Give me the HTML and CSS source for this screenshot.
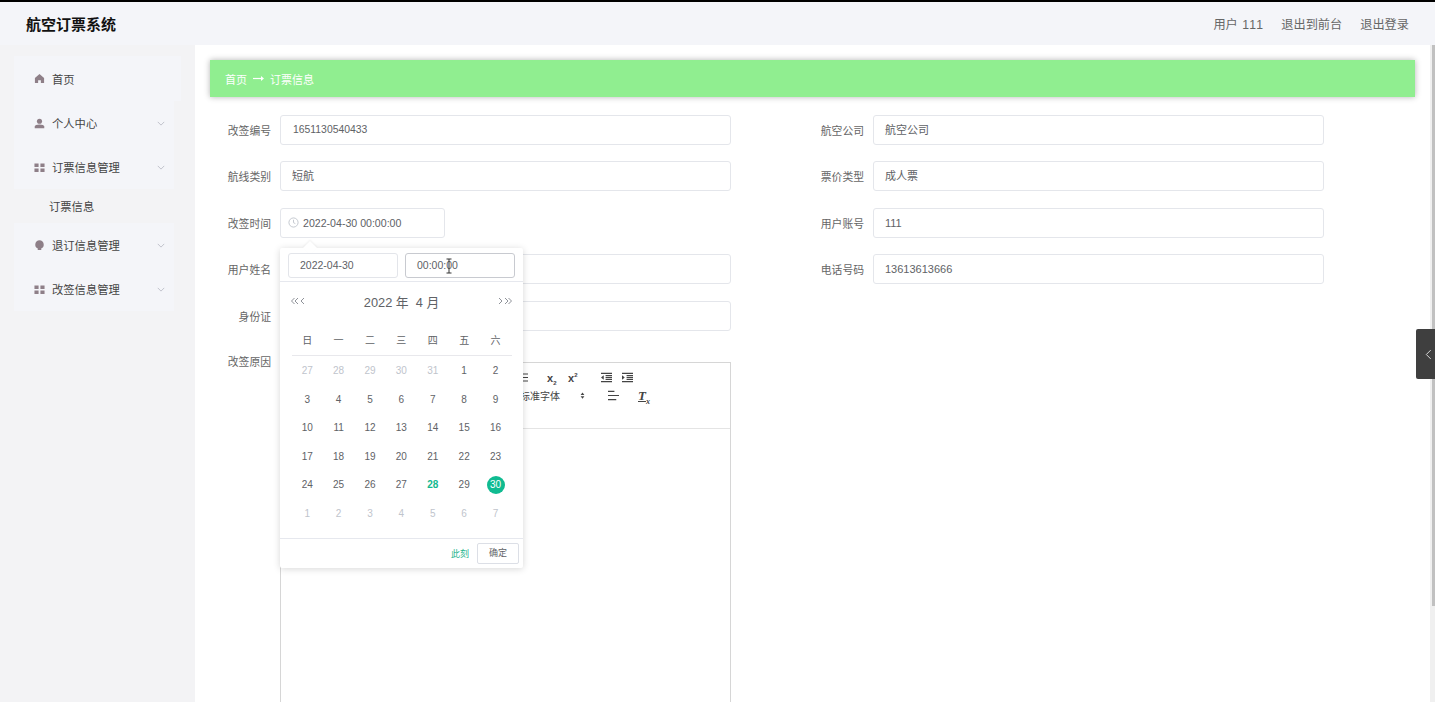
FILE: index.html
```html
<!DOCTYPE html>
<html lang="zh">
<head>
<meta charset="utf-8">
<title>航空订票系统</title>
<link rel="stylesheet" href="styles.css">
</head>
<body>
<header class="topbar">
  <div class="brand">航空订票系统</div>
  <nav class="topnav">
    <span>用户 <span class="uid">111</span></span><span>退出到前台</span><span>退出登录</span>
  </nav>
</header>
<div class="shell">
  <aside class="sidebar">
    <ul class="menu">
      <li class="menu-item home">
        <svg class="mi" viewBox="0 0 12 12"><path d="M6 1 1 5.500V11h3.500V8h3v3H11V5.500z"/></svg><span>首页</span>
      </li>
      <li class="menu-item">
        <svg class="mi" viewBox="0 0 12 12"><circle cx="6" cy="3.600" r="2.800"/><path d="M.8 11.200V9.400C.8 8 3 7 6 7s5.200 1 5.200 2.400v1.800z"/></svg><span>个人中心</span>
        <svg class="chev" viewBox="0 0 10 6"><path d="M1 1l4 4 4-4"/></svg>
      </li>
      <li class="menu-item">
        <svg class="mi" viewBox="0 0 12 12"><path d="M.5 1.500h4.500v4H.5zM7 1.500h4.500v4H7zM.5 7h4.500v4H.5zM7 7h4.500v4H7z"/></svg><span>订票信息管理</span>
        <svg class="chev" viewBox="0 0 10 6"><path d="M1 1l4 4 4-4"/></svg>
      </li>
      <li class="submenu">订票信息</li>
      <li class="menu-item">
        <svg class="mi" viewBox="0 0 12 12"><path d="M6 .3a4.700 4.700 0 0 1 1.800 9L8 11H4l.2-1.700A4.700 4.700 0 0 1 6 .3z"/></svg><span>退订信息管理</span>
        <svg class="chev" viewBox="0 0 10 6"><path d="M1 1l4 4 4-4"/></svg>
      </li>
      <li class="menu-item">
        <svg class="mi" viewBox="0 0 12 12"><path d="M.5 1.500h4.500v4H.5zM7 1.500h4.500v4H7zM.5 7h4.500v4H.5zM7 7h4.500v4H7z"/></svg><span>改签信息管理</span>
        <svg class="chev" viewBox="0 0 10 6"><path d="M1 1l4 4 4-4"/></svg>
      </li>
    </ul>
  </aside>
  <main class="content">
    <div class="crumb"><span>首页</span><svg class="arrow" viewBox="0 0 11 7"><path class="shaft" d="M0 3.500h9"/><path d="M8 1l3 2.500L8 6z"/></svg><span>订票信息</span></div>
    <form class="form">
      <div class="grid">
        <div class="field"><label>改签编号</label><div class="input num">1651130540433</div></div>
        <div class="field"><label>航空公司</label><div class="input">航空公司</div></div>
        <div class="field"><label>航线类别</label><div class="input">短航</div></div>
        <div class="field"><label>票价类型</label><div class="input">成人票</div></div>
        <div class="field"><label>改签时间</label>
          <div class="input date">
            <svg class="clock" viewBox="0 0 12 12"><circle cx="6" cy="6" r="5"/><path d="M6 3v3.200l2 1"/></svg>2022-04-30 00:00:00
          </div>
        </div>
        <div class="field"><label>用户账号</label><div class="input">111</div></div>
        <div class="field"><label>用户姓名</label><div class="input"></div></div>
        <div class="field"><label>电话号码</label><div class="input">13613613666</div></div>
        <div class="field"><label>身份证</label><div class="input"></div></div>
      </div>
      <div class="field editor-field">
        <label>改签原因</label>
        <div class="editor">
          <div class="toolbar">
            <div class="tb-row one">
              <svg class="tb list" viewBox="0 0 8 9"><path d="M3 1h5M3 4.500h5M3 8h5"/></svg>
              <span class="tb-gap"></span>
              <span class="script">x<sub>2</sub></span>
              <span class="script">x<sup>2</sup></span>
              <svg class="tb ind first" viewBox="0 0 14 12"><path d="M1 1.500h12M6 6h7M6 4h7M6 8h7M1 10.500h12"/><path class="fill" d="M4 3.500v5L1 6z"/></svg>
              <svg class="tb ind" viewBox="0 0 14 12"><path d="M1 1.500h12M6 6h7M6 4h7M6 8h7M1 10.500h12"/><path class="fill" d="M1 3.500v5L4 6z"/></svg>
            </div>
            <div class="tb-row two">
              <span class="fontname">标准字体</span>
              <svg class="updown" viewBox="0 0 8 12"><path d="M4 1l3 4H1zM4 11L1 7h6z"/></svg>
              <svg class="tb align" viewBox="0 0 14 12"><path d="M1 1.500h7M1 6h12M1 10.500h9"/></svg>
              <span class="clear">T<sub>x</sub></span>
            </div>
          </div>
        </div>
      </div>
    </form>
  </main>
</div>

<div class="scrollbar"><div class="thumb"></div></div>

<section class="picker">
  <span class="picker-arrow"></span>
  <div class="picker-top">
    <div class="mini">2022-04-30</div>
    <div class="mini active">00:00:00</div>
  </div>
  <div class="picker-head">
    <span class="nav">
      <svg viewBox="0 0 15 8"><path d="M4.500 1 1.500 4l3 3M8 1 5 4l3 3M14 1l-3 3 3 3"/></svg>
    </span>
    <span class="title">2022 年&nbsp; 4 月</span>
    <span class="nav">
      <svg viewBox="0 0 15 8"><path d="M1 1l3 3-3 3M7 1l3 3-3 3M10.500 1l3 3-3 3"/></svg>
    </span>
  </div>
  <div class="cal week">
    <span>日</span><span>一</span><span>二</span><span>三</span><span>四</span><span>五</span><span>六</span>
  </div>
  <div class="cal days">
    <span class="off">27</span><span class="off">28</span><span class="off">29</span><span class="off">30</span><span class="off">31</span><span>1</span><span>2</span>
    <span>3</span><span>4</span><span>5</span><span>6</span><span>7</span><span>8</span><span>9</span>
    <span>10</span><span>11</span><span>12</span><span>13</span><span>14</span><span>15</span><span>16</span>
    <span>17</span><span>18</span><span>19</span><span>20</span><span>21</span><span>22</span><span>23</span>
    <span>24</span><span>25</span><span>26</span><span>27</span><span class="today">28</span><span>29</span><span class="sel"><i>30</i></span>
    <span class="off">1</span><span class="off">2</span><span class="off">3</span><span class="off">4</span><span class="off">5</span><span class="off">6</span><span class="off">7</span>
  </div>
  <div class="picker-foot">
    <span class="now">此刻</span><span class="ok">确定</span>
  </div>
</section>

<svg class="ibeam" viewBox="0 0 8 16"><path d="M1.500 1H4v14H1.500M6.500 1H4M6.500 15H4"/></svg>
<div class="side-tab"><svg viewBox="0 0 8 12"><path d="M6.500 1 1.500 6l5 5"/></svg></div>
</body>
</html>
```
FILE: styles.css
```css
* { box-sizing: border-box; }
html, body { margin: 0; height: 100%; overflow: hidden; }
body {
  font-family: "Liberation Sans", "Noto Sans CJK SC", sans-serif;
  font-size: 11px;
  color: #606266;
  background: #fff;
}
.topbar {
  height: 45px;
  border-top: 2px solid #000;
  background: #f4f5f9;
  display: flex;
  align-items: center;
  justify-content: space-between;
  padding: 0 26px;
}
.brand { font-size: 15px; font-weight: 700; color: #111; }
.topnav { display: flex; gap: 18px; font-size: 12.200px; color: #666; white-space: nowrap; }
.uid { letter-spacing: 1.200px; margin-left: 1px; margin-right: -1px; }
.shell { display: flex; height: 657px; }
.sidebar {
  width: 195px;
  flex: none;
  background: #f3f3f5;
  padding: 11px 21px 0 14px;
}
.menu { list-style: none; margin: 0; padding: 0; background: #f4f5f9; font-size: 11.300px; }
.menu-item {
  height: 44px;
  display: flex;
  align-items: center;
  padding-left: 20px;
  color: #444;
  position: relative;
}
.menu-item.home { height: 45px; margin-right: -7px; background: #f4f5f9; }
.mi { width: 11px; height: 11px; margin-right: 7px; fill: #8e7f88; flex: none; }
.chev {
  width: 8px; height: 5px;
  position: absolute; left: 143px; top: 20px;
  fill: none; stroke: #b5b8c0; stroke-width: 1;
}
.submenu { height: 34px; line-height: 36px; padding-left: 35px; color: #444; background: #f3f3f5; }
.content { flex: 1; min-width: 0; padding: 15px 20px 0 15px; background: #fff; }
.crumb {
  height: 37px;
  background: #90ee90;
  box-shadow: 0 0 6px rgba(0,0,0,.3);
  display: flex;
  align-items: center;
  gap: 6px;
  padding-left: 15px;
  color: #fff;
  width: 1205px;
}
.arrow { width: 11px; height: 7px; fill: #fff; }
.arrow .shaft { stroke: #fff; stroke-width: 1.200; }
.form { margin-top: 18px; }
.grid {
  display: grid;
  grid-template-columns: 521px 521px;
  column-gap: 72px;
  row-gap: 16.400px;
}
.field { display: flex; align-items: center; height: 30px; }
.field label { width: 61px; text-align: right; margin-right: 9px; color: #666; flex: none; font-size: 10.800px; }
.input {
  width: 451px;
  height: 30px;
  border: 1px solid #e4e6eb;
  border-radius: 3px;
  padding: 0 11px;
  line-height: 28px;
  color: #606266;
  background: #fff;
}
.input.num { font-size: 10.400px; padding-left: 12px; }
.input.date { width: 165px; padding-left: 7px; display: flex; align-items: center; font-size: 10.600px; }
.clock { width: 11px; height: 11px; margin-right: 4px; fill: none; stroke: #c0c4cc; stroke-width: 1; }
.editor-field { align-items: flex-start; height: auto; margin-top: 31px; }
.editor-field label { margin-top: -9px; }
.editor { width: 451px; height: 400px; border: 1px solid #d6d6d6; border-bottom: none; }
.toolbar { height: 66px; padding-top: 6px; border-bottom: 1px solid #e4e4e4; position: relative; }
.tb-row { display: flex; align-items: center; height: 18px; padding-left: 239px; color: #444; }
.tb { fill: none; stroke: #444; stroke-width: 1.200; }
.tb.list { width: 8px; height: 9px; }
.tb-gap { width: 19px; }
.script { width: 21px; font-weight: 700; font-size: 11px; color: #444; line-height: 12px; }
.script sub, .script sup { font-size: 6px; line-height: 0; }
.ind { width: 13px; height: 11px; margin-right: 8px; }
.ind.first { margin-left: 11px; }
.ind .fill { fill: #444; stroke: none; }
.fontname { width: 60px; font-size: 10px; }
.updown { width: 5px; height: 9px; fill: #444; margin-right: 22px; }
.align { width: 13px; height: 11px; margin-right: 18px; }
.clear { font-family: "Liberation Serif", serif; font-style: italic; font-size: 13px; font-weight: 700; text-decoration: underline; color: #444; }
.clear sub { font-size: 8px; line-height: 0; }

.picker {
  position: absolute;
  left: 280px; top: 248px;
  width: 243px; height: 320px;
  background: #fff;
  box-shadow: 0 1px 7px rgba(0,0,0,.16);
  border-radius: 2px;
}
.picker-arrow {
  position: absolute; left: 25px; top: -5px;
  width: 10px; height: 10px;
  background: #fff;
  transform: rotate(45deg);
  box-shadow: -1px -1px 2px rgba(0,0,0,.05);
}
.picker-top {
  position: relative;
  height: 34px;
  display: flex;
  gap: 7px;
  padding: 5px 8px 0;
  border-bottom: 1px solid #e6e8ee;
}
.mini {
  width: 110px; height: 25px;
  border: 1px solid #e3e5ea;
  border-radius: 3px;
  line-height: 23px;
  padding-left: 11px;
  font-size: 10.500px;
  color: #606266;
}
.mini.active { border-color: #c8cad0; }
.picker-head {
  height: 41px;
  display: flex;
  align-items: center;
  justify-content: space-between;
  padding: 0 10px;
  position: relative;
}
.title { font-size: 12.800px; color: #606266; position: absolute; left: 0; right: 0; text-align: center; top: 12px; line-height: 18px; }
.nav { display: flex; margin-top: -3px; }
.nav svg { width: 15px; height: 8px; fill: none; stroke: #8f9299; stroke-width: 1; }
.cal { display: grid; grid-template-columns: repeat(7, 31.400px); margin: 0 11px 0 11.500px; justify-items: center; }
.week { height: 33px; align-items: center; font-size: 10px; color: #606266; border-bottom: 1px solid #e8e8ec; padding-top: 1px; }
.days { grid-auto-rows: 28.500px; align-items: center; padding-top: .5px; font-size: 10px; color: #606266; height: 182px; }
.off { color: #c0c4cc; }
.today { color: #13b98f; font-weight: 700; }
.sel i {
  display: block; width: 18px; height: 18px; line-height: 18px; border-radius: 50%;
  background: #10bb91; color: #fff; font-style: normal; text-align: center;
}
.picker-foot {
  height: 30px;
  border-top: 1px solid #e6e8ee;
  display: flex;
  align-items: center;
  justify-content: flex-end;
  padding: 0 4px 0 0;
  gap: 8px;
  font-size: 9px;
}
.now { color: #25b48d; }
.ok { width: 42px; height: 21px; line-height: 19px; border: 1px solid #dcdfe6; border-radius: 2px; text-align: center; color: #606266; }

.ibeam { position: absolute; left: 445px; top: 258px; width: 8px; height: 16px; fill: none; stroke: #333; stroke-width: 1; }
.side-tab {
  position: absolute; right: 0; top: 329px;
  width: 19px; height: 50px;
  background: #3f3f3f;
  border-radius: 2px 0 0 2px;
  display: flex; align-items: center; padding-left: 9px;
}
.side-tab svg { width: 7px; height: 11px; fill: none; stroke: #eee; stroke-width: 1; }
.scrollbar { position: absolute; right: 0; top: 45px; bottom: 0; width: 5px; background: #f0f0f0; display: flex; justify-content: flex-end; }
.thumb { width: 3px; height: 561px; background: #c1c1c1; }
```
